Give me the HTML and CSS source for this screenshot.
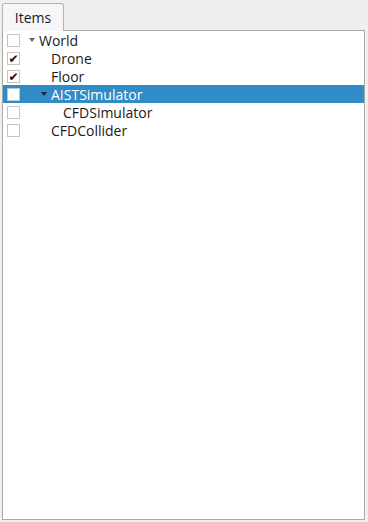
FILE: index.html
```html
<!DOCTYPE html>
<html lang="en">
<head>
  <meta charset="UTF-8">
  <title>Items</title>
  <link rel="stylesheet" href="styles.css">
</head>
<body>
  <div class="tabs">
    <div class="tab">Items</div>
    <div class="tab-rest"></div>
  </div>
  <div class="panel">
    <div class="row">
      <span class="check"></span>
      <span class="indent" style="width: 0px"></span>
      <span class="arrow"></span>
      <span class="label">World</span>
    </div>
    <div class="row">
      <span class="check checked">&#10004;</span>
      <span class="indent" style="width: 12px"></span>
      <span class="arrow none"></span>
      <span class="label">Drone</span>
    </div>
    <div class="row">
      <span class="check checked">&#10004;</span>
      <span class="indent" style="width: 12px"></span>
      <span class="arrow none"></span>
      <span class="label">Floor</span>
    </div>
    <div class="row selected">
      <span class="check"></span>
      <span class="indent" style="width: 12px"></span>
      <span class="arrow"></span>
      <span class="label">AISTSimulator</span>
    </div>
    <div class="row">
      <span class="check"></span>
      <span class="indent" style="width: 24px"></span>
      <span class="arrow none"></span>
      <span class="label">CFDSimulator</span>
    </div>
    <div class="row">
      <span class="check"></span>
      <span class="indent" style="width: 12px"></span>
      <span class="arrow none"></span>
      <span class="label">CFDCollider</span>
    </div>
  </div>
</body>
</html>
```

FILE: styles.css
```css
html,
body {
  margin: 0;
  height: 100%;
}

body {
  background-color: #efefef;
  font-family: "Open Sans", "DejaVu Sans", sans-serif;
  font-size: 14px;
  color: #1a1a1a;
  padding: 2px 3px 2px 2px;
  box-sizing: border-box;
  display: flex;
  flex-direction: column;
}

.tabs {
  display: flex;
  height: 28px;
}

.tab {
  width: 60px;
  border: 1px solid #b4b4b4;
  border-bottom: none;
  border-radius: 3px 3px 0 0;
  background-color: #f6f6f6;
  text-align: center;
  line-height: 27px;
  position: relative;
  top: 1px;
}

.tab-rest {
  flex: 1;
}

.panel {
  flex: 1;
  background-color: #fff;
  border: 1px solid #a8a8a8;
}

.row {
  display: flex;
  align-items: center;
  height: 18px;
}

.row.selected {
  background-color: #308cc6;
  color: #fff;
}

.check {
  width: 11px;
  height: 11px;
  border: 1px solid #c4c4c4;
  background-color: #fff;
  margin-left: 4px;
  margin-right: 7px;
  font-size: 12px;
  line-height: 11px;
  text-align: center;
  color: #111;
}

.arrow {
  width: 12px;
  height: 12px;
  position: relative;
}

.arrow::after {
  content: "";
  position: absolute;
  left: 2px;
  top: 4px;
  border-left: 3.5px solid transparent;
  border-right: 3.5px solid transparent;
  border-top: 4px solid #666;
}

.selected .arrow::after {
  border-top-color: #1a2a3a;
}

.arrow.none::after {
  display: none;
}

.label {
  white-space: nowrap;
}
```
